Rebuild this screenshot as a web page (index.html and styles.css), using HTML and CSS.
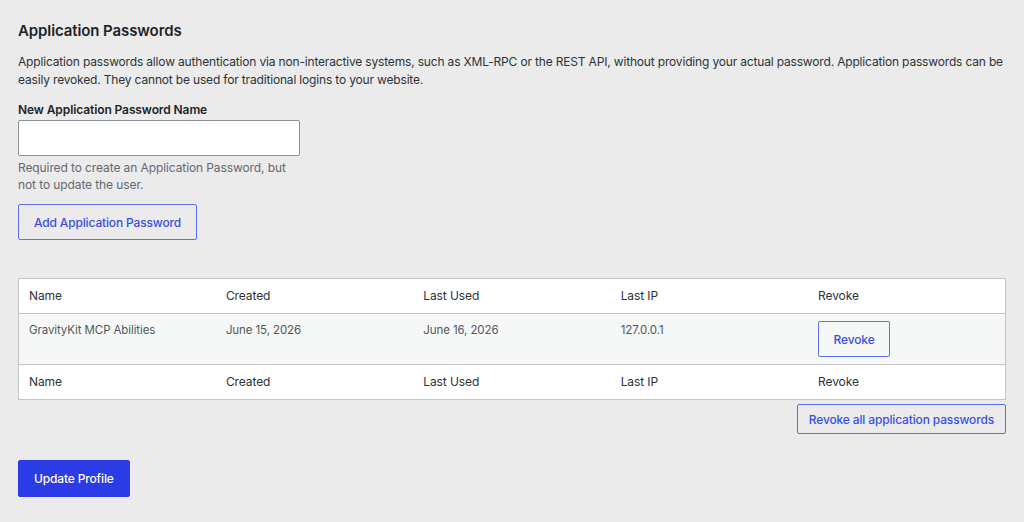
FILE: index.html
```html
<!DOCTYPE html>
<html lang="en">
<head>
    <meta charset="UTF-8">
    <meta name="viewport" content="width=device-width, initial-scale=1.0">
    <title>Application Passwords</title>
    <link rel="stylesheet" href="styles.css">
</head>
<body>
    <div class="wrap">
        <h2>Application Passwords</h2>
        <p class="intro">Application passwords allow authentication via non-interactive systems, such as XML-RPC or the REST API, without providing your actual password. Application passwords can be easily revoked. They cannot be used for traditional logins to your website.</p>

        <div class="new-password">
            <label for="new_application_password_name">New Application Password Name</label>
            <input type="text" id="new_application_password_name">
            <p class="description">Required to create an Application Password, but not to update the user.</p>
            <button class="button">Add Application Password</button>
        </div>

        <!-- Existing passwords -->
        <table class="passwords-table">
            <thead>
                <tr>
                    <th>Name</th>
                    <th>Created</th>
                    <th>Last Used</th>
                    <th>Last IP</th>
                    <th>Revoke</th>
                </tr>
            </thead>
            <tbody>
                <tr>
                    <td>GravityKit MCP Abilities</td>
                    <td>June 15, 2026</td>
                    <td>June 16, 2026</td>
                    <td>127.0.0.1</td>
                    <td><button class="button">Revoke</button></td>
                </tr>
            </tbody>
            <tfoot>
                <tr>
                    <th>Name</th>
                    <th>Created</th>
                    <th>Last Used</th>
                    <th>Last IP</th>
                    <th>Revoke</th>
                </tr>
            </tfoot>
        </table>
        <div class="table-actions">
            <button class="button small">Revoke all application passwords</button>
        </div>

        <button class="button primary">Update Profile</button>
    </div>
</body>
</html>
```

FILE: styles.css
```css
body {
    margin: 0;
    background-color: #ebebeb;
    color: #1d2327;
    font-family: Inter, "Noto Sans", sans-serif;
    font-size: 12px;
    letter-spacing: -0.1px;
    line-height: 1.4;
}
.wrap {
    padding: 21px 18px 0 18px;
}
h2 {
    font-size: 15px;
    font-weight: 600;
    margin: 0 0 12px 0;
    line-height: 20px;
}
.intro {
    margin: 0 0 12px 0;
    line-height: 18px;
    letter-spacing: -0.17px;
    color: #2c3338;
}
.new-password label {
    display: block;
    font-weight: 600;
    line-height: 18px;
    margin-bottom: 1px;
}
.new-password input {
    display: block;
    box-sizing: border-box;
    width: 282px;
    height: 36px;
    margin: 0;
    border: 1px solid #8c8f94;
    border-radius: 2px;
    background: white;
}
.description {
    width: 282px;
    color: #646970;
    line-height: 17px;
    margin: 3px 0 11px 0;
}
.button {
    box-sizing: border-box;
    height: 36px;
    padding: 0 15px;
    font-family: inherit;
    font-size: 12px;
    font-weight: 500;
    letter-spacing: -0.15px;
    color: #3a4ee6;
    background: transparent;
    border: 1px solid #5f70ec;
    border-radius: 2px;
    cursor: pointer;
}
.button.small {
    height: 30px;
    padding: 0 11px;
}
.button.primary {
    background-color: #2b3ce6;
    border-color: #2b3ce6;
    color: white;
    height: 37px;
}
.passwords-table {
    margin-top: 38px;
    width: 100%;
    border-collapse: collapse;
    border: 1px solid #c3c4c7;
    background: white;
    table-layout: fixed;
}
.passwords-table th {
    text-align: left;
    font-weight: 400;
    font-size: 12px;
    color: #2c3338;
    padding: 0 10px;
    height: 34px;
}
.passwords-table thead tr {
    border-bottom: 1px solid #c3c4c7;
}
.passwords-table tfoot tr {
    border-top: 1px solid #c3c4c7;
}
.passwords-table tbody tr {
    background-color: #f6f7f7;
}
.passwords-table td {
    vertical-align: top;
    padding: 8px 10px 7px 10px;
    color: #50575e;
    font-size: 11.5px;
    height: 35px;
}
.passwords-table td .button {
    width: 72px;
    padding: 0;
    margin-top: -1px;
}
.table-actions {
    display: flex;
    justify-content: flex-end;
    margin: 4px 0 26px 0;
}
```
